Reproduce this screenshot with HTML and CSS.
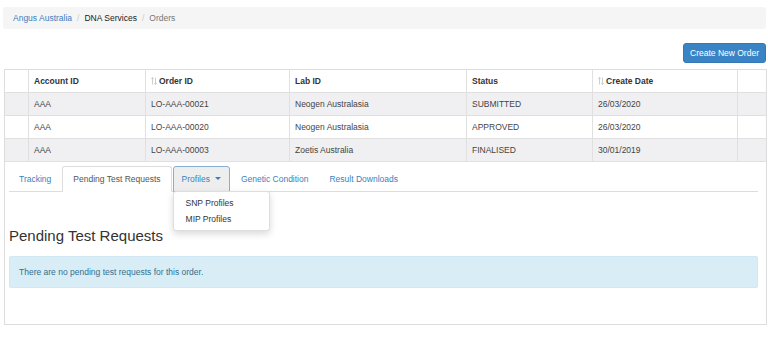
FILE: index.html
```html
<!DOCTYPE html>
<html>
<head>
<meta charset="utf-8">
<link rel="stylesheet" href="styles.css">
</head>
<body>
<ol class="breadcrumb">
  <li><a class="crumb-link">Angus Australia</a></li>
  <li class="crumb-sep">/</li>
  <li class="crumb-mid">DNA Services</li>
  <li class="crumb-sep">/</li>
  <li class="crumb-active">Orders</li>
</ol>
<div class="toolbar">
  <button class="btn-primary">Create New Order</button>
</div>
<div class="panel">
  <table class="orders">
    <colgroup>
      <col class="c0"><col class="c1"><col class="c2"><col class="c3"><col class="c4"><col class="c5"><col>
    </colgroup>
    <thead>
      <tr>
        <th></th>
        <th>Account ID</th>
        <th><svg class="sort" width="6" height="8" viewBox="0 0 6 8"><path d="M1.5 0.5V7.5M0.3 1.8L1.5 0.5L2.7 1.8M4.5 0.5V7.5M3.3 6.2L4.5 7.5L5.7 6.2" fill="none" stroke="#c8c8c8" stroke-width="0.9"/></svg>Order ID</th>
        <th>Lab ID</th>
        <th>Status</th>
        <th><svg class="sort" width="6" height="8" viewBox="0 0 6 8"><path d="M1.5 0.5V7.5M0.3 1.8L1.5 0.5L2.7 1.8M4.5 0.5V7.5M3.3 6.2L4.5 7.5L5.7 6.2" fill="none" stroke="#c8c8c8" stroke-width="0.9"/></svg>Create Date</th>
        <th></th>
      </tr>
    </thead>
    <tbody>
      <tr class="odd"><td></td><td>AAA</td><td>LO-AAA-00021</td><td>Neogen Australasia</td><td>SUBMITTED</td><td>26/03/2020</td><td></td></tr>
      <tr><td></td><td>AAA</td><td>LO-AAA-00020</td><td>Neogen Australasia</td><td>APPROVED</td><td>26/03/2020</td><td></td></tr>
      <tr class="odd"><td></td><td>AAA</td><td>LO-AAA-00003</td><td>Zoetis Australia</td><td>FINALISED</td><td>30/01/2019</td><td></td></tr>
    </tbody>
  </table>
  <div class="detail">
    <ul class="nav-tabs">
      <li><a class="tab">Tracking</a></li>
      <li><a class="tab active">Pending Test Requests</a></li>
      <li class="dropdown">
        <a class="tab open">Profiles <span class="caret"></span></a>
        <ul class="dropdown-menu">
          <li>SNP Profiles</li>
          <li>MIP Profiles</li>
        </ul>
      </li>
      <li><a class="tab">Genetic Condition</a></li>
      <li><a class="tab">Result Downloads</a></li>
    </ul>
    <h3 class="title">Pending Test Requests</h3>
    <div class="alert">There are no pending test requests for this order.</div>
  </div>
</div>
</body>
</html>
```

FILE: styles.css
```css
* { box-sizing: border-box; }
body {
  margin: 0;
  font-family: "Liberation Sans", Arial, sans-serif;
  font-size: 8.5px;
  color: #333;
  background: #fff;
}
.breadcrumb {
  margin: 7px 2px 0 3px;
  height: 22px;
  padding: 0 10px;
  list-style: none;
  background: #f5f5f5;
  border-radius: 3px;
  display: flex;
  align-items: center;
}
.crumb-link { color: #3a7fbd; }
.crumb-sep { color: #ccc; padding: 0 5px; }
.crumb-mid { color: #222; }
.crumb-active { color: #777; }

.toolbar {
  display: flex;
  justify-content: flex-end;
  margin: 14px 2px 0 0;
}
.btn-primary {
  height: 20px;
  width: 83px;
  padding: 0;
  font-family: inherit;
  font-size: 8.5px;
  color: #fff;
  background: #3a84c6;
  border: 1px solid #3478b6;
  border-radius: 3px;
}

.panel {
  margin: 6px 1px 0 4px;
  border: 1px solid #ddd;
  padding-bottom: 36px;
}
.orders {
  width: 100%;
  border-collapse: separate;
  border-spacing: 0;
  table-layout: fixed;
}
.c0 { width: 24px; }
.c1 { width: 117px; }
.c2 { width: 144px; }
.c3 { width: 177px; }
.c4 { width: 126px; }
.c5 { width: 145px; }
.orders th, .orders td {
  border-right: 1px solid #e0e0e0;
  border-bottom: 1px solid #e0e0e0;
  height: 23px;
  padding: 0 4px 0 5px;
  text-align: left;
  white-space: nowrap;
  vertical-align: middle;
}
.orders th:last-child, .orders td:last-child { border-right: 0; }
.orders th { font-weight: bold; color: #333; }
.orders td { color: #444; }
.orders tr.odd td { background: #f0f0f2; }
.sort { margin-right: 2px; vertical-align: -1px; }

.detail {
  padding: 4px 8px 0 4px;
}
.nav-tabs {
  list-style: none;
  margin: 0;
  padding: 0;
  display: flex;
  border-bottom: 1px solid #ddd;
  height: 26px;
}
.nav-tabs > li { position: relative; margin-right: 1px; }
.tab {
  display: flex;
  align-items: center;
  height: 26px;
  padding: 0 9px 1px;
  border: 1px solid transparent;
  border-radius: 3px 3px 0 0;
  color: #3a7fbd;
  white-space: nowrap;
}
.tab.active {
  color: #555;
  background: #fff;
  border-color: #ddd #ddd transparent;
  padding: 0 10px 1px;
}
.tab.open {
  background: #eee;
  border-color: #86aed2;
  padding: 0 8px 1px;
}
.caret {
  display: inline-block;
  width: 0;
  height: 0;
  margin-left: 5px;
  border-top: 3px solid #3a7fbd;
  border-left: 3px solid transparent;
  border-right: 3px solid transparent;
}
.dropdown-menu {
  position: absolute;
  top: 25px;
  left: 0;
  width: 97px;
  margin: 0;
  padding: 3px 0;
  list-style: none;
  background: #fff;
  border: 1px solid rgba(0,0,0,0.13);
  border-radius: 3px;
  box-shadow: 0 3px 7px rgba(0,0,0,0.15);
  z-index: 5;
}
.dropdown-menu li {
  line-height: 16px;
  padding: 0 12px;
  color: #333;
}
.title {
  margin: 35px 0 12px;
  font-size: 15px;
  line-height: 17px;
  font-weight: normal;
  color: #333;
}
.alert {
  height: 32px;
  padding: 0 9px;
  display: flex;
  align-items: center;
  background: #d9edf7;
  border: 1px solid #cfe8f3;
  border-radius: 2px;
  color: #31708f;
}
```
